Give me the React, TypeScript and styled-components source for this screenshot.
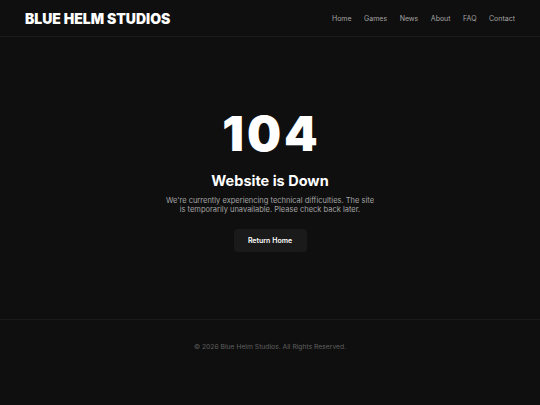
import React from "react";
import styled, { createGlobalStyle } from "styled-components";

const Global = createGlobalStyle`
  html, body { margin: 0; padding: 0; background: #0f0f0f; }
  body { font-family: Inter, "Noto Sans", sans-serif; color: #fff; }
  * { box-sizing: border-box; }
`;

const Page = styled.div`
  min-height: 405px;
  display: flex;
  flex-direction: column;
  background: #0f0f0f;
`;

const Header = styled.header`
  height: 37px;
  display: flex;
  align-items: center;
  justify-content: space-between;
  padding: 0 25px;
  border-bottom: 1px solid #1a1a1a;
`;

const Brand = styled.div`
  font-size: 14px;
  font-weight: 900;
  color: #fff;
`;

const Nav = styled.nav`
  display: flex;
  gap: 12.5px;
`;

const NavLink = styled.a`
  font-size: 7px;
  color: #a3a3a3;
  text-decoration: none;
`;

const Main = styled.main`
  height: 283px;
  display: flex;
  flex-direction: column;
  align-items: center;
  justify-content: center;
  text-align: center;
  border-bottom: 1px solid #1a1a1a;
  padding-top: 8px;
`;

const Code = styled.h1`
  margin: 0;
  font-size: 48px;
  font-weight: 900;
  line-height: 44px;
  letter-spacing: 3px;
  padding-left: 3px;
`;

const Title = styled.h2`
  margin: 16px 0 0;
  font-size: 14.5px;
  font-weight: 700;
  line-height: 18px;
`;

const Text = styled.p`
  margin: 6px 0 0;
  max-width: 215px;
  font-size: 7.5px;
  line-height: 9px;
  color: #a3a3a3;
`;

const Button = styled.a`
  margin-top: 15px;
  width: 73px;
  height: 23px;
  display: flex;
  align-items: center;
  justify-content: center;
  background: #1a1a1a;
  border-radius: 4px;
  font-size: 7px;
  font-weight: 600;
  color: #fff;
  text-decoration: none;
`;

const Footer = styled.footer`
  padding-top: 22px;
  text-align: center;
  font-size: 6.75px;
  color: #5f5f5f;
`;

export default function App() {
  const links = ["Home", "Games", "News", "About", "FAQ", "Contact"];
  return (
    <Page>
      <Global />
      <Header>
        <Brand>BLUE HELM STUDIOS</Brand>
        <Nav>
          {links.map((l) => (
            <NavLink key={l} href="#">
              {l}
            </NavLink>
          ))}
        </Nav>
      </Header>
      <Main>
        <Code>104</Code>
        <Title>Website is Down</Title>
        <Text>
          We're currently experiencing technical difficulties. The site is
          temporarily unavailable. Please check back later.
        </Text>
        <Button href="#">Return Home</Button>
      </Main>
      <Footer>© 2026 Blue Helm Studios. All Rights Reserved.</Footer>
    </Page>
  );
}
